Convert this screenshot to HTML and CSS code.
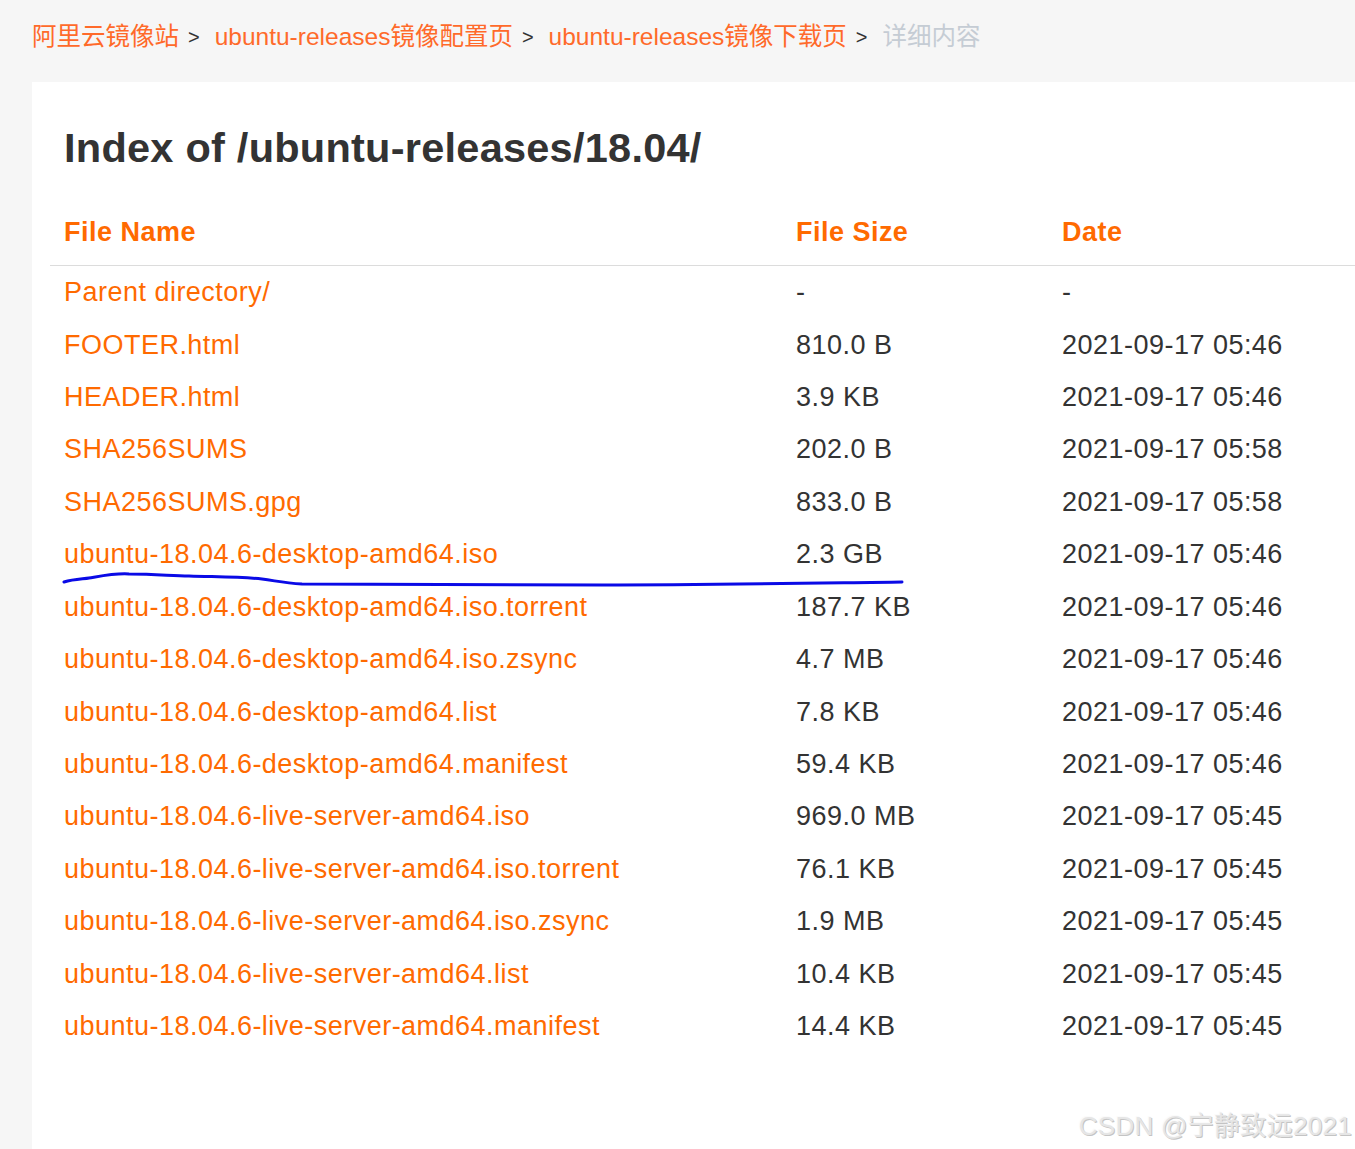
FILE: index.html
```html
<!DOCTYPE html>
<html lang="zh-CN">
<head>
<meta charset="utf-8">
<title>Index of /ubuntu-releases/18.04/</title>
<link rel="stylesheet" href="styles.css">
</head>
<body>
<nav class="breadcrumb">
  <a class="crumb" href="#">阿里云镜像站</a><span class="sep">&gt;</span>
  <a class="crumb" href="#">ubuntu-releases镜像配置页</a><span class="sep">&gt;</span>
  <a class="crumb" href="#">ubuntu-releases镜像下载页</a><span class="sep">&gt;</span>
  <span class="crumb current">详细内容</span>
</nav>
<main class="card">
  <h1 class="title">Index of /ubuntu-releases/18.04/</h1>
  <table class="listing">
    <colgroup><col class="c-name"><col class="c-size"><col class="c-date"></colgroup>
    <thead>
      <tr><th>File Name</th><th>File Size</th><th>Date</th></tr>
    </thead>
    <tbody>
      <tr><td><a href="#">Parent directory/</a></td><td>-</td><td>-</td></tr>
      <tr><td><a href="#">FOOTER.html</a></td><td>810.0 B</td><td>2021-09-17 05:46</td></tr>
      <tr><td><a href="#">HEADER.html</a></td><td>3.9 KB</td><td>2021-09-17 05:46</td></tr>
      <tr><td><a href="#">SHA256SUMS</a></td><td>202.0 B</td><td>2021-09-17 05:58</td></tr>
      <tr><td><a href="#">SHA256SUMS.gpg</a></td><td>833.0 B</td><td>2021-09-17 05:58</td></tr>
      <tr><td><a href="#">ubuntu-18.04.6-desktop-amd64.iso</a></td><td>2.3 GB</td><td>2021-09-17 05:46</td></tr>
      <tr><td><a href="#">ubuntu-18.04.6-desktop-amd64.iso.torrent</a></td><td>187.7 KB</td><td>2021-09-17 05:46</td></tr>
      <tr><td><a href="#">ubuntu-18.04.6-desktop-amd64.iso.zsync</a></td><td>4.7 MB</td><td>2021-09-17 05:46</td></tr>
      <tr><td><a href="#">ubuntu-18.04.6-desktop-amd64.list</a></td><td>7.8 KB</td><td>2021-09-17 05:46</td></tr>
      <tr><td><a href="#">ubuntu-18.04.6-desktop-amd64.manifest</a></td><td>59.4 KB</td><td>2021-09-17 05:46</td></tr>
      <tr><td><a href="#">ubuntu-18.04.6-live-server-amd64.iso</a></td><td>969.0 MB</td><td>2021-09-17 05:45</td></tr>
      <tr><td><a href="#">ubuntu-18.04.6-live-server-amd64.iso.torrent</a></td><td>76.1 KB</td><td>2021-09-17 05:45</td></tr>
      <tr><td><a href="#">ubuntu-18.04.6-live-server-amd64.iso.zsync</a></td><td>1.9 MB</td><td>2021-09-17 05:45</td></tr>
      <tr><td><a href="#">ubuntu-18.04.6-live-server-amd64.list</a></td><td>10.4 KB</td><td>2021-09-17 05:45</td></tr>
      <tr><td><a href="#">ubuntu-18.04.6-live-server-amd64.manifest</a></td><td>14.4 KB</td><td>2021-09-17 05:45</td></tr>
    </tbody>
  </table>
  <svg class="scribble" width="860" height="20" viewBox="0 0 860 20" aria-hidden="true">
    <path d="M2 12 C 12 9, 22 9, 27 8 C 45 5, 55 3, 67 4 C 95 4, 110 6, 127 6 C 160 7, 180 7, 200 9 C 215 11, 222 13, 240 14 C 320 15, 420 15, 540 15 C 650 15, 760 13, 840 12" fill="none" stroke="#0a0ae6" stroke-width="3" stroke-linecap="round"/>
  </svg>
  <div class="watermark">CSDN @宁静致远2021</div>
</main>
</body>
</html>
```
FILE: styles.css
```css
html, body {
  margin: 0;
  padding: 0;
  height: 100%;
  overflow: hidden;
}
body {
  background: #f6f6f6;
  font-family: "Liberation Sans", Arial, "Noto Sans CJK SC", sans-serif;
  color: #333;
}
a {
  text-decoration: none;
  color: #ff6a00;
}
.breadcrumb {
  display: flex;
  align-items: center;
  height: 34px;
  padding: 20px 0 28px 32px;
  font-size: 24.5px;
  line-height: 34px;
  white-space: nowrap;
}
.crumb {
  color: #ff6a2a;
}
.crumb.current {
  color: #c5ccd4;
}
.sep {
  font-size: 20px;
  color: #333;
  margin: 0 15px 0 9px;
}
.card {
  position: relative;
  margin-left: 32px;
  background: #fff;
  height: 1025px;
  padding: 42px 0 0 18px;
}
.title {
  margin: 0 0 27px 14px;
  font-size: 41.5px;
  line-height: 48px;
  font-weight: bold;
  letter-spacing: 0.25px;
  color: #333;
}
.listing {
  width: 100%;
  border-collapse: collapse;
  table-layout: fixed;
  font-size: 27px;
  letter-spacing: 0.48px;
}
.c-name { width: 732px; }
.c-size { width: 266px; }
.listing th {
  text-align: left;
  font-weight: bold;
  color: #ff6a00;
  padding: 17px 14px;
  line-height: 32px;
  border-bottom: 1px solid #dcdcdc;
}
.listing td {
  padding: 0 14px;
  height: 52.43px;
  line-height: 32px;
  white-space: nowrap;
  color: #333;
}
.listing td a {
  color: #ff6a00;
}
.scribble {
  position: absolute;
  left: 30px;
  top: 488px;
}
.watermark {
  position: absolute;
  right: 3px;
  top: 1023px;
  font-size: 26px;
  letter-spacing: 0.3px;
  color: #e6e6e6;
  text-shadow: 1px 1px 0 #c4c4c4, -1px -1px 0 #fbfbfb;
  white-space: nowrap;
}
```
